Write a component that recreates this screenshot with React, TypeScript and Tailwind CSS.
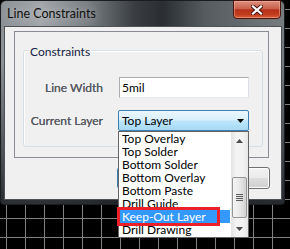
import React from 'react';

const layers = [
  'Top Overlay',
  'Top Solder',
  'Bottom Solder',
  'Bottom Overlay',
  'Bottom Paste',
  'Drill Guide',
  'Keep-Out Layer',
  'Drill Drawing',
];

const CloseGlyph = () => (
  <svg width="12" height="10" viewBox="0 0 12 10">
    <path d="M2 1.5 L10 8.5 M10 1.5 L2 8.5" stroke="#4a1a14" strokeWidth="4.2" strokeLinecap="square" />
    <path d="M2 1.5 L10 8.5 M10 1.5 L2 8.5" stroke="#ffffff" strokeWidth="2.2" strokeLinecap="square" />
  </svg>
);

const Arrow = ({ up, color }: { up?: boolean; color: string }) => (
  <svg width="7" height="4" viewBox="0 0 7 4">
    <path d={up ? 'M0 4 L3.5 0 L7 4 Z' : 'M0 0 L7 0 L3.5 4 Z'} fill={color} />
  </svg>
);

export default function App() {
  return (
    <div className="relative w-[290px] h-[249px] overflow-hidden bg-black [background-image:linear-gradient(to_right,#808080_1px,transparent_1px),linear-gradient(to_bottom,#808080_1px,transparent_1px)] [background-size:19px_19px] [background-position:6px_9px] font-[Lato,sans-serif] text-[12px] text-black">
      {/* window */}
      <div className="w-[285px] h-[205px] flex flex-col rounded-t-[6px] rounded-b-[4px] border border-[#1b1e21] bg-[linear-gradient(180deg,rgba(0,0,0,0)_0%,rgba(0,0,0,0)_30%,rgba(24,28,32,0.85)_100%),linear-gradient(90deg,#8b9095_0%,#a3a7ab_14%,#7c8186_30%,#3a3e42_47%,#2a2e32_57%,#565b60_72%,#767b80_100%)]">
        {/* title bar */}
        <div className="h-[25px] flex items-start justify-between">
          <span className="ml-[6px] mt-[5px] leading-[15px] text-[12.5px] text-[#111] [text-shadow:0_0_8px_rgba(255,255,255,0.55)]">
            Line Constraints
          </span>
          <div className="-mt-px mr-[3px] w-[48px] h-[19px] flex items-center justify-center rounded-b-[4px] border border-[#4b140c] shadow-[inset_0_0_0_1px_rgba(255,190,170,0.45)] bg-[linear-gradient(180deg,#dc8f80_0%,#c9604c_45%,#b6311a_52%,#c23c1e_80%,#d9603a_100%)]">
            <CloseGlyph />
          </div>
        </div>

        {/* client area */}
        <div className="ml-[3px] w-[278px] h-[174px] flex flex-col border border-[#4d5257] bg-[#f0f0f0]">
          {/* panel */}
          <div className="ml-[9px] mt-[4px] w-[255px] h-[127px] border border-[#898c95]">
            {/* group box */}
            <div className="relative ml-[8px] mt-[18px] w-[240px] h-[97px] rounded-[3px] border border-[#d5dfe5] shadow-[inset_1px_1px_0_#ffffff]">
              <span className="absolute left-[5px] top-[-7px] px-[1px] leading-[15px] bg-[#f0f0f0] text-[#151d45]">
                Constraints
              </span>
              <div className="mt-[26px] grid grid-cols-[79px_130px] gap-x-[16px] gap-y-[12px] items-center">
                <span className="text-right text-[#575a62] [text-shadow:0_0_0.6px_#575a62]">Line Width</span>
                <div className="h-[21px] flex items-center px-[2px] bg-white border border-[#abadb3] border-b-[#e3e9ef] border-r-[#dbdfe6]">
                  5mil
                </div>
                <span className="text-right text-[#575a62] [text-shadow:0_0_0.6px_#575a62]">Current Layer</span>
                <div className="-ml-px w-[131px] h-[21px] flex items-center justify-between pl-[3px] pr-[4px] rounded-[2px] border border-[#3c7fb1] bg-[linear-gradient(180deg,#eaf6fd_0%,#d9f0fc_48%,#bee6fd_52%,#a7d9f5_100%)]">
                  <span>Top Layer</span>
                  <Arrow color="#000000" />
                </div>
              </div>
            </div>
          </div>

          {/* buttons */}
          <div className="mt-[9px] ml-[112px] flex gap-[8px]">
            <div className="w-[71px] h-[22px] rounded-[3px] border border-[#3c7fb1] bg-[linear-gradient(180deg,#eaf6fd,#bee6fd)]" />
            <div className="w-[74px] h-[22px] rounded-[3px] border border-[#707070] shadow-[inset_0_0_0_1px_#fcfcfc] bg-[linear-gradient(180deg,#f2f2f2_0%,#ebebeb_48%,#dddddd_52%,#cfcfcf_100%)]" />
          </div>
        </div>
      </div>

      {/* dropdown list */}
      <div className="absolute left-[118px] top-[131px] w-[131px] h-[107px] flex border border-[#646464] bg-white">
        <div className="flex-1 flex flex-col">
          {layers.map((l) => (
            <div
              key={l}
              className={
                l === 'Keep-Out Layer'
                  ? 'mx-px h-[13px] leading-[13px] pl-[2px] bg-[#3399ff] text-white'
                  : 'mx-px h-[13px] leading-[13px] pl-[2px]'
              }
            >
              {l}
            </div>
          ))}
        </div>
        <div className="w-[17px] flex flex-col bg-[linear-gradient(90deg,#e2e2e2_0%,#f3f3f3_30%,#f3f3f3_70%,#e6e6e6_100%)]">
          <div className="h-[17px] flex items-center justify-center">
            <Arrow up color="#4d4d4d" />
          </div>
          <div className="flex-1 pt-[28px]">
            <div className="mx-px h-[41px] flex flex-col items-center justify-center gap-[1px] rounded-[2px] border border-[#959595] bg-[linear-gradient(90deg,#f5f5f5_0%,#e8e8e8_50%,#d2d2d2_100%)]">
              <div className="w-[7px] h-px bg-[#5b5b5b]" />
              <div className="w-[7px] h-px bg-[#5b5b5b]" />
              <div className="w-[7px] h-px bg-[#5b5b5b]" />
              <div className="w-[7px] h-px bg-[#5b5b5b]" />
            </div>
          </div>
          <div className="h-[17px] flex items-center justify-center">
            <Arrow color="#4d4d4d" />
          </div>
        </div>
      </div>

      {/* red annotation */}
      <div className="absolute left-[117px] top-[207px] w-[103px] h-[19px] border-[3px] border-[#ec2028]" />
    </div>
  );
}
